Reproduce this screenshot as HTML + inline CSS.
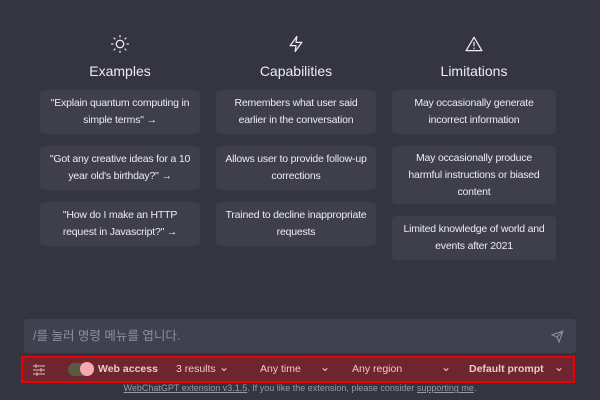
<!DOCTYPE html>
<html><head><style>
body{margin:0;width:600px;height:400px;background:#343541;font-family:"Liberation Sans","Noto Sans CJK KR",sans-serif;color:#ececf1;position:relative;overflow:hidden}
.col{position:absolute;top:34px;width:162px;text-align:center}
.ic{height:22px;display:flex;justify-content:center}
.h{font-size:14px;margin-top:7px;margin-bottom:11px}
.card{background:#3e3f4b;border-radius:4px;font-size:10.5px;line-height:17px;padding:5px 6px;letter-spacing:-0.2px;box-sizing:border-box;display:flex;align-items:center;justify-content:center;margin-bottom:12px}
.inp{position:absolute;left:24px;top:319px;width:552px;height:34px;background:#40414f;border-radius:4px;font-size:12.5px;color:#8e8ea0;line-height:34px;padding-left:9px;box-sizing:border-box}
.bar{position:absolute;left:21px;top:356px;width:554px;height:27px;background:#6f2530;border:2px solid #e00;box-sizing:border-box;font-size:10.5px;color:#f0c8c8}
.bar span{position:absolute;top:5px}
.ch{font-size:12px;top:2px!important}
.ft{position:absolute;top:383px;width:600px;text-align:center;font-size:9px;color:#9a9aa6}
</style></head><body>
<div class="col" style="left:40px;width:160px">
<div class="ic"><svg width="20" height="20" viewBox="0 0 24 24" fill="none" stroke="#ececf1" stroke-width="1.5" stroke-linecap="round"><circle cx="12" cy="12" r="4.5"/><path d="M12 2v1.5M12 20.5V22M4.9 4.9l1 1M18.1 18.1l1 1M2 12h1.5M20.5 12H22M4.9 19.1l1-1M18.1 5.9l1-1"/></svg></div>
<div class="h">Examples</div>
<div class="card" style="height:44px">"Explain quantum computing in simple terms" →</div>
<div class="card" style="height:44px">"Got any creative ideas for a 10 year old's birthday?" →</div>
<div class="card" style="height:44px">"How do I make an HTTP request in Javascript?" →</div>
</div>
<div class="col" style="left:216px;width:160px">
<div class="ic"><svg width="20" height="20" viewBox="0 0 24 24" fill="none" stroke="#ececf1" stroke-width="1.5" stroke-linejoin="round"><path d="M13 3L5 14h7l-1 7 8-11h-7z"/></svg></div>
<div class="h">Capabilities</div>
<div class="card" style="height:44px">Remembers what user said earlier in the conversation</div>
<div class="card" style="height:44px">Allows user to provide follow-up corrections</div>
<div class="card" style="height:44px">Trained to decline inappropriate requests</div>
</div>
<div class="col" style="left:392px;width:164px">
<div class="ic"><svg width="20" height="20" viewBox="0 0 24 24" fill="none" stroke="#ececf1" stroke-width="1.5" stroke-linejoin="round" stroke-linecap="round"><path d="M12 4L2.5 20h19z"/><path d="M12 10v4M12 17v.5"/></svg></div>
<div class="h">Limitations</div>
<div class="card" style="height:44px">May occasionally generate incorrect information</div>
<div class="card" style="height:58px">May occasionally produce harmful instructions or biased content</div>
<div class="card" style="height:44px">Limited knowledge of world and events after 2021</div>
</div>
<div class="inp">/를 눌러 명령 메뉴를 엽니다.<svg style="position:absolute;right:12px;top:11px" width="13" height="13" viewBox="0 0 24 24" fill="none" stroke="#8e8ea0" stroke-width="2"><path d="M22 2L11 13M22 2l-7 20-4-9-9-4z"/></svg></div>
<div class="bar">
<svg style="position:absolute;left:9px;top:5px" width="14" height="14" viewBox="0 0 14 14" stroke="#c9a0a0" stroke-width="1.2"><path d="M1 3h12M1 7h12M1 11h12"/><path d="M4 1v4M9 5v4M5 9v4"/></svg>
<span style="left:45px;top:5px;width:26px;height:13px;border-radius:7px;background:#5a5a40"></span>
<span style="left:57px;top:4px;width:14px;height:14px;border-radius:7px;background:#f7a8b0"></span>
<span style="left:75px;font-weight:bold">Web access</span>
<span style="left:153px">3 results</span><span class="ch" style="left:196px">⌄</span>
<span style="left:237px">Any time</span><span class="ch" style="left:297px">⌄</span>
<span style="left:329px">Any region</span><span class="ch" style="left:418px">⌄</span>
<span style="left:446px;font-weight:bold">Default prompt</span><span class="ch" style="left:531px">⌄</span>
</div>
<div class="ft"><u>WebChatGPT extension v3.1.5</u>. If you like the extension, please consider <u>supporting me</u>.</div>
</body></html>
